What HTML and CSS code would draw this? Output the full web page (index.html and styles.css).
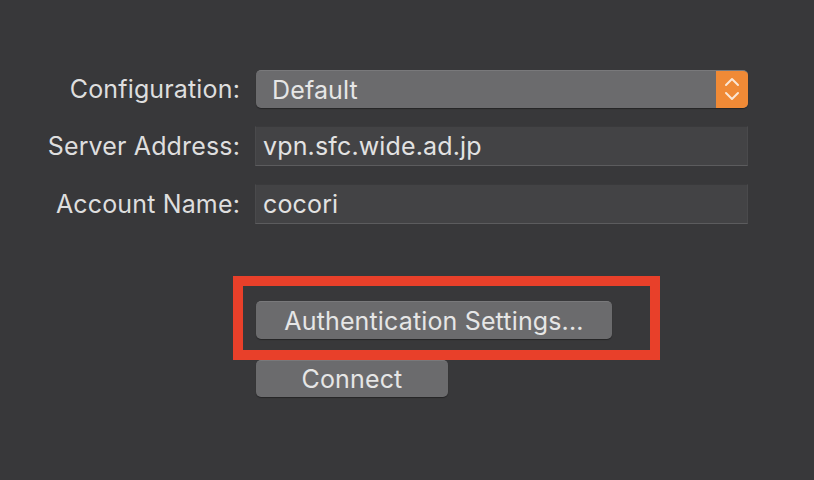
FILE: index.html
```html
<!DOCTYPE html>
<html>
<head>
<meta charset="utf-8">
<link rel="stylesheet" href="styles.css">
</head>
<body>
<div class="pane">
  <div class="form">
    <div class="label">Configuration:</div>
    <div class="popup">
      <span class="popup-text">Default</span>
      <span class="stepper">
        <svg width="32" height="38" viewBox="0 0 32 38">
          <path d="M10 15 L16 9 L22 15" fill="none" stroke="#fbe6d4" stroke-width="2" stroke-linecap="round" stroke-linejoin="round"/>
          <path d="M10 23 L16 29 L22 23" fill="none" stroke="#fbe6d4" stroke-width="2" stroke-linecap="round" stroke-linejoin="round"/>
        </svg>
      </span>
    </div>
    <div class="label">Server Address:</div>
    <div class="field">vpn.sfc.wide.ad.jp</div>
    <div class="label">Account Name:</div>
    <div class="field">cocori</div>
  </div>
  <div class="buttons">
    <div class="highlight-wrap">
      <button class="btn btn-auth">Authentication Settings...</button>
      <div class="highlight"></div>
    </div>
    <button class="btn btn-connect">Connect</button>
  </div>
</div>
</body>
</html>
```
FILE: styles.css
```css
html, body {
  margin: 0;
  padding: 0;
  background: #38383a;
  width: 814px;
  height: 480px;
  overflow: hidden;
}
body {
  font-family: Inter, "Liberation Sans", sans-serif;
  color: #e0e0e0;
}
.pane {
  padding-top: 70px;
}
.form {
  display: grid;
  grid-template-columns: 240px 493px;
  column-gap: 15px;
  row-gap: 18px;
  align-items: center;
}
.label {
  text-align: right;
  font-size: 25px;
  color: #dedede;
  letter-spacing: 0.15px;
}
.popup {
  margin-left: 1px;
  height: 38px;
  width: 492px;
  background: #6b6b6d;
  border-radius: 5px;
  display: flex;
  align-items: center;
  overflow: hidden;
  box-shadow: 0 1px 1px rgba(0,0,0,0.35);
  border-top: 1px solid #79797b;
  box-sizing: border-box;
}
.popup-text {
  flex: 1;
  padding-left: 16px;
  font-size: 25px;
  letter-spacing: 0.15px;
  color: #e6e6e6;
}
.stepper {
  width: 32px;
  height: 38px;
  background: #f08a36;
  display: flex;
  align-items: center;
  justify-content: center;
  margin-top: -1px;
}
.stepper svg { display: block; }
.field {
  height: 40px;
  box-sizing: border-box;
  background: #434345;
  border-top: 1px solid #3a3a3c;
  border-left: 1px solid #4a4a4c;
  border-right: 1px solid #4a4a4c;
  border-bottom: 1px solid #5c5c5e;
  padding-left: 7px;
  font-size: 25px;
  letter-spacing: 0.15px;
  display: flex;
  align-items: center;
  color: #e2e2e2;
}
.buttons {
  margin-top: 77px;
  margin-left: 256px;
  display: flex;
  flex-direction: column;
  align-items: flex-start;
  gap: 21px;
}
.highlight-wrap {
  position: relative;
}
.btn {
  font-family: Inter, "Liberation Sans", sans-serif;
  font-size: 25px;
  letter-spacing: 0.15px;
  color: #e6e6e6;
  background: #6b6b6d;
  border: none;
  border-top: 1px solid #79797b;
  border-radius: 5px;
  height: 38px;
  padding: 0;
  box-shadow: 0 1px 1px rgba(0,0,0,0.35);
  display: block;
}
.btn-auth {
  width: 356px;
}
.btn-connect {
  width: 192px;
  height: 37px;
}
.highlight {
  position: absolute;
  left: -23px;
  top: -25px;
  width: 427px;
  height: 84px;
  box-sizing: border-box;
  border: 10px solid #e8402a;
}
```
